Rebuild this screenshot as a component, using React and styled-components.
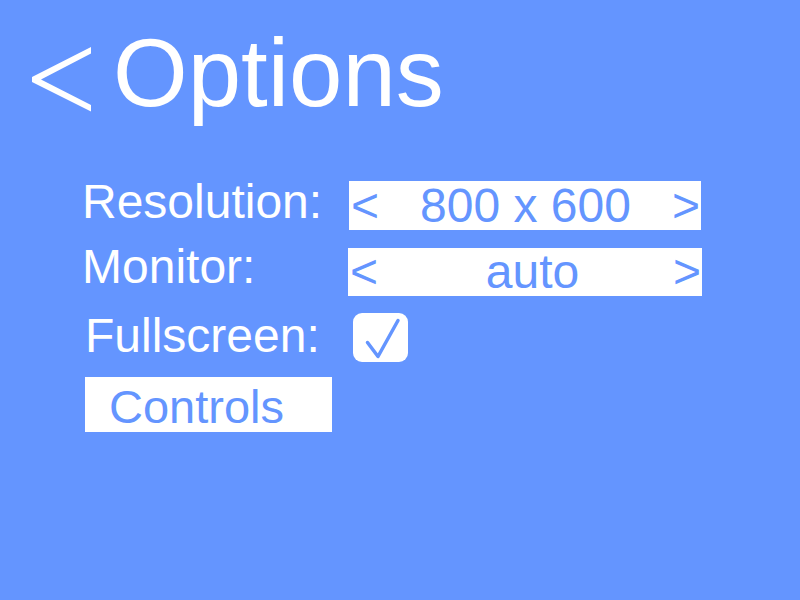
import React from "react";
import styled, { createGlobalStyle } from "styled-components";

const BLUE = "#6495ff";
const FONT = `"Liberation Sans", Arial, sans-serif`;

const Global = createGlobalStyle`
  html, body { margin: 0; padding: 0; background: ${BLUE}; }
  body { font-family: ${FONT}; }
`;

const Screen = styled.div`
  width: 800px;
  height: 600px;
  background: ${BLUE};
  color: #fff;
  overflow: hidden;
  font-family: ${FONT};
`;

const Header = styled.header`
  display: flex;
  align-items: flex-start;
  gap: 21px;
  padding: 25px 0 0 32px;
`;

const BackIcon = styled.svg`
  flex: none;
  margin-top: 22px;
  display: block;
`;

const Title = styled.h1`
  margin: 0;
  font-size: 96px;
  line-height: 96px;
  font-weight: 400;
`;

const Form = styled.div`
  display: flex;
  flex-direction: column;
  padding: 57px 0 0 82px;
`;

const Row = styled.div`
  display: grid;
  grid-template-columns: 266px auto;
  align-items: start;
  height: ${(p) => p.$h}px;
`;

const Label = styled.span`
  font-size: 48px;
  line-height: 48px;
  padding-left: ${(p) => p.$indent || 0}px;
  white-space: nowrap;
`;

const Selector = styled.div`
  display: flex;
  align-items: center;
  box-sizing: border-box;
  width: ${(p) => p.$w}px;
  height: ${(p) => p.$hgt}px;
  margin-top: ${(p) => p.$top}px;
  margin-left: ${(p) => p.$left || 0}px;
  padding: 0 1px 0 2px;
  background: #fff;
  color: ${BLUE};
  font-size: 48px;
  line-height: 48px;
`;

const Arrow = styled.span`
  flex: none;
`;

const Value = styled.span`
  flex: 1;
  text-align: center;
  padding-left: ${(p) => (p.$shift || 0) * 2}px;
  white-space: nowrap;
`;

const Check = styled.div`
  display: flex;
  align-items: flex-start;
  width: 55px;
  height: 49px;
  margin-top: 1px;
  margin-left: 5px;
  border-radius: 9px;
  background: #fff;
`;

const CheckMark = styled.svg`
  display: block;
  flex: none;
`;

const ControlsButton = styled.button`
  display: block;
  box-sizing: border-box;
  width: 247px;
  height: 55px;
  margin: 0 0 0 3px;
  padding: 3px 0 0 24px;
  border: 0;
  border-radius: 0;
  background: #fff;
  color: ${BLUE};
  font-family: ${FONT};
  font-size: 47px;
  line-height: 47px;
  text-align: left;
  align-self: flex-start;
`;

export default function App() {
  return (
    <Screen>
      <Global />
      <Header>
        <BackIcon width="60" height="66" viewBox="0 0 60 66">
          <polygon
            points="59,0 59,6.5 9,32.5 59,58 59,64.5 0,35 0,30"
            fill="#fff"
          />
        </BackIcon>
        <Title>Options</Title>
      </Header>
      <Form>
        <Row $h={65}>
          <Label>Resolution:</Label>
          <Selector $w={352} $hgt={49} $top={3} $left={1}>
            <Arrow>&lt;</Arrow>
            <Value>800 x 600</Value>
            <Arrow>&gt;</Arrow>
          </Selector>
        </Row>
        <Row $h={69}>
          <Label>Monitor:</Label>
          <Selector $w={354} $hgt={48} $top={5}>
            <Arrow>&lt;</Arrow>
            <Value $shift={7}>auto</Value>
            <Arrow>&gt;</Arrow>
          </Selector>
        </Row>
        <Row $h={65}>
          <Label $indent={3}>Fullscreen:</Label>
          <Check role="checkbox" aria-checked="true">
            <CheckMark width="55" height="49" viewBox="0 0 55 49">
              <polyline
                points="14.5,29.5 25,43.5 45,7.5"
                fill="none"
                stroke={BLUE}
                strokeWidth="3.5"
                strokeLinecap="round"
                strokeLinejoin="round"
              />
            </CheckMark>
          </Check>
        </Row>
        <ControlsButton>Controls</ControlsButton>
      </Form>
    </Screen>
  );
}
